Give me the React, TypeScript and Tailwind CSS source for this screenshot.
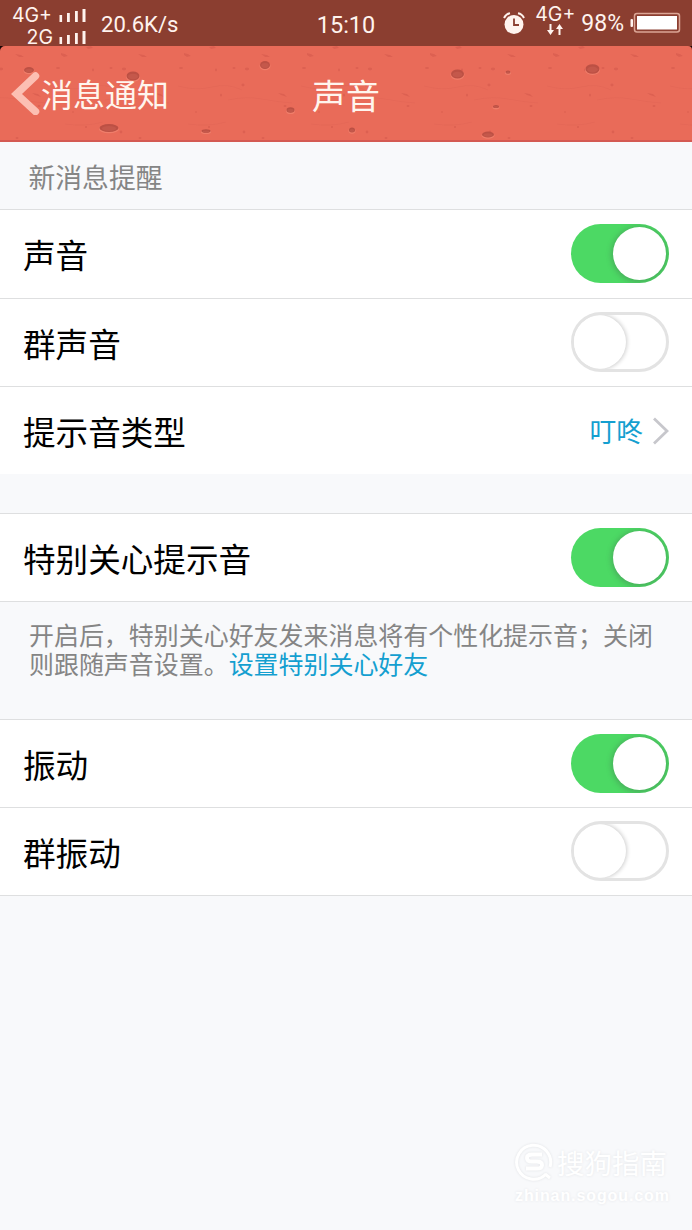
import type { ReactNode } from "react";

interface SwitchProps {
  on: boolean;
}

interface RowProps {
  label: string;
  height?: string;
  children: ReactNode;
}

interface Spot {
  x: number;
  y: number;
  rx: number;
  ry: number;
}

const spots: Spot[] = [
  { x: 29, y: 70, rx: 5, ry: 3 },
  { x: 133, y: 76, rx: 6.5, ry: 4.5 },
  { x: 109, y: 128, rx: 9.5, ry: 4 },
  { x: 206, y: 131, rx: 4.5, ry: 1.8 },
  { x: 265, y: 65, rx: 5, ry: 4 },
  { x: 290.5, y: 110, rx: 4, ry: 2.8 },
  { x: 352, y: 130, rx: 3, ry: 2.5 },
  { x: 457.5, y: 74, rx: 6.5, ry: 4.5 },
  { x: 508, y: 72, rx: 2.5, ry: 1.6 },
  { x: 496, y: 106.5, rx: 3, ry: 1.6 },
  { x: 488, y: 134.5, rx: 6, ry: 3 },
  { x: 592.5, y: 69, rx: 7, ry: 4.8 },
];

function HeaderTexture() {
  return (
    <svg
      className="absolute inset-0"
      width="692"
      height="94"
      viewBox="0 46 692 94"
      aria-hidden="true"
    >
      <defs>
        <pattern id="grain" x="55" y="46" width="123" height="96" patternUnits="userSpaceOnUse">
          <g fill="#b9403a" opacity="0.26">
            <path d="M6 7l4 1 3 2-4 1-3-2z" />
            <path d="M31 1l5-1 2 2-5 1z" />
            <ellipse cx="3" cy="22" rx="2" ry="1" />
            <ellipse cx="69" cy="23" rx="2.2" ry="1.4" />
            <ellipse cx="56" cy="22" rx="1.5" ry="1" />
            <path d="M83 8l6 1 3 2-5 0z" />
            <path d="M100 47l6 1 3 3-6-2z" />
            <ellipse cx="65" cy="39" rx="1.6" ry="1.4" />
            <ellipse cx="38" cy="24" rx="1" ry="1.4" />
            <ellipse cx="43" cy="49" rx="1" ry="1.5" />
            <ellipse cx="107" cy="60" rx="1.6" ry="1" />
            <ellipse cx="66" cy="86" rx="1.4" ry="1.4" />
            <ellipse cx="31" cy="81" rx="1.2" ry="1" />
            <ellipse cx="18" cy="66" rx="1" ry="0.8" />
            <ellipse cx="85" cy="92" rx="1.6" ry="1" />
          </g>
          <g fill="none" stroke="#c94f44" strokeWidth="1" opacity="0.12">
            <path d="M0 40q18 5 34 1t30 3M50 54q18 -4 34 -1t30 4M10 78q20 3 38 -2" />
          </g>
        </pattern>
      </defs>
      <rect x="0" y="46" width="692" height="96" fill="url(#grain)" />
      {spots.map((s) => (
        <g key={`${s.x}-${s.y}`}>
          <ellipse cx={s.x} cy={s.y + 1} rx={s.rx + 0.5} ry={s.ry + 0.3} fill="#f58a76" opacity="0.6" />
          <ellipse cx={s.x} cy={s.y} rx={s.rx} ry={s.ry} fill="#bc5044" />
          <ellipse cx={s.x} cy={s.y + 0.5} rx={s.rx * 0.75} ry={s.ry * 0.6} fill="#c4584b" />
        </g>
      ))}
      <path d="M0 46h5a5 5 0 0 0 -5 5z" fill="#1a0605" />
      <path d="M692 46h-4a4 4 0 0 1 4 4z" fill="#1a0605" />
    </svg>
  );
}

function SignalBars() {
  return (
    <svg width="28" height="14" viewBox="0 0 28 14" fill="#fff3ee" aria-hidden="true">
      <rect x="0.5" y="7" width="2.6" height="7" />
      <rect x="8" y="5" width="2.8" height="9" />
      <rect x="16" y="3" width="2.8" height="11" />
      <rect x="23.5" y="1" width="3" height="13" />
    </svg>
  );
}

function StatusBar() {
  return (
    <div className="relative h-[46px] bg-[#8b3e30] font-['Roboto','Noto_Sans',sans-serif] text-[#fff3ee]">
      <div className="flex h-full justify-between">
        <div className="flex">
          <div className="flex w-[87px] flex-col items-end pt-1">
            <div className="flex h-[22px] items-center">
              <span className="font-['Inter',sans-serif] text-[19.5px] leading-[22px]">4G+</span>
              <span className="ml-[7px]"><SignalBars /></span>
            </div>
            <div className="flex h-[22px] items-center">
              <span className="font-['Inter',sans-serif] text-[19.5px] leading-[22px]">2G</span>
              <span className="ml-[6px]"><SignalBars /></span>
            </div>
          </div>
          <span className="ml-[14px] pt-px text-[22.1px] leading-[46px]">20.6K/s</span>
        </div>
        <div className="flex">
          <svg className="mt-3 mr-[8px]" width="22" height="23" viewBox="0 0 22 23" aria-hidden="true">
            <circle cx="11" cy="12.5" r="9.5" fill="#fff3ee" />
            <path d="M1 6Q3 2 7 1.3M21 6Q19 2 15 1.3" fill="none" stroke="#fff3ee" strokeWidth="2" />
            <path d="M11 6.5v6.5h5" fill="none" stroke="#8b3e30" strokeWidth="1.8" />
          </svg>
          <div className="flex w-[44px] flex-col items-center pt-1">
            <span className="font-['Inter',sans-serif] text-[19.5px] leading-[21px]">4G+</span>
            <svg className="-mt-px" width="16" height="12" viewBox="0 0 16 12" fill="#fff3ee" aria-hidden="true">
              <path d="M2.5 0h2v6h2.5l-3.5 5-3.5-5h2.5z" />
              <path d="M11.5 11h2v-6h2.5l-3.5-5-3.5 5h2.5z" />
            </svg>
          </div>
          <span className="ml-[4px] pt-px text-[23px] leading-[46px]">98%</span>
          <svg className="mt-3 mr-[11px] ml-[6px]" width="51" height="22" viewBox="0 0 51 22" aria-hidden="true">
            <rect x="0.5" y="7" width="2.5" height="8" rx="1" fill="#fff3ee" />
            <rect x="4.5" y="1.5" width="45" height="18.5" rx="2.5" fill="none" stroke="#dba595" strokeWidth="1.5" />
            <rect x="7" y="4" width="40" height="13.5" fill="#fff" />
          </svg>
        </div>
      </div>
      <div className="absolute inset-x-0 top-0 pt-[2px] text-center text-[23.5px] leading-[46px]">
        15:10
      </div>
    </div>
  );
}

function Header() {
  return (
    <header className="relative h-24 border-b-2 border-[#d45a52] bg-[#e96b59] text-[#fff5ee]">
      <HeaderTexture />
      <div className="relative flex h-full items-center">
        <svg className="ml-[11px]" width="30" height="44" viewBox="0 0 30 44" aria-hidden="true">
          <path d="M24.5 5L5.5 23L24.5 40.5" fill="none" stroke="#fcbfb3" strokeWidth="7.5" strokeLinecap="round" />
        </svg>
        <span className="text-[32px] leading-[48px]">消息通知</span>
      </div>
      <h1 className="absolute inset-x-0 top-[25px] text-center text-[34px] leading-[48px]">声音</h1>
    </header>
  );
}

function Switch({ on }: SwitchProps) {
  if (on) {
    return (
      <div className="-mt-px flex h-[59px] w-[98px] items-center justify-end overflow-hidden rounded-full bg-[#4cd964] pr-[3px]">
        <div className="size-[53px] rounded-full bg-white shadow-[0_1px_5px_2px_rgba(70,110,80,0.35)]" />
      </div>
    );
  }
  return (
    <div className="-mt-px flex h-[60px] w-[98px] items-center overflow-hidden rounded-full border-[3px] border-[#e3e3e3] bg-white">
      <div className="-ml-0.5 size-[54px] rounded-full bg-white shadow-[0_0_4px_1px_rgba(0,0,0,0.2)]" />
    </div>
  );
}

function Row({ label, height = "h-[88px]", children }: RowProps) {
  return (
    <div className={`flex items-center justify-between pr-[23px] pl-[23px] ${height}`}>
      <span className="text-[32.6px] leading-[48px] text-black">{label}</span>
      {children}
    </div>
  );
}

function Watermark() {
  return (
    <div className="absolute right-[21px] bottom-[24px] w-[156px] text-white [text-shadow:0_0_3px_#e3e5e8]">
      <div className="flex items-center gap-[3px]">
        <svg className="drop-shadow-[0_0_1px_#dfe1e4]" width="39" height="40" viewBox="0 0 39 40" fill="none" stroke="#fff" aria-hidden="true">
          <path d="M31 32A17 17 0 1 1 35 25M30 32l5 4" strokeWidth="3" />
          <path d="M27 12.5H17q-5 0-5 3.5t5 3.5h5q5 0 5 3.5t-5 3.5H11" strokeWidth="4" />
        </svg>
        <span className="text-[27.5px] leading-[36px]">搜狗指南</span>
      </div>
      <div className="mt-1 font-['Liberation_Sans',sans-serif] text-[16px] leading-[20px] font-bold tracking-[0.9px] whitespace-nowrap">
        zhinan.sogou.com
      </div>
    </div>
  );
}

export default function App() {
  return (
    <div className="relative h-[1230px] w-[692px] overflow-hidden bg-[#f8f9fb] font-['Noto_Sans_CJK_SC',sans-serif]">
      <StatusBar />
      <Header />

      <div className="flex h-[67px] items-center pt-1 pl-[28.5px] text-[26.8px] text-[#858585]">
        新消息提醒
      </div>
      <section className="divide-y divide-[#dedfe0] border-t border-[#dedfe0] bg-white">
        <Row label="声音" height="h-[89px]">
          <Switch on />
        </Row>
        <Row label="群声音">
          <Switch on={false} />
        </Row>
        <Row label="提示音类型" height="h-[87px]">
          <div className="flex items-center gap-[9px]">
            <span className="pt-0.5 text-[26.8px] text-[#149fd0]">叮咚</span>
            <svg width="17" height="28" viewBox="0 0 17 28" aria-hidden="true">
              <path d="M2 1.5L15 14L2 26.5" fill="none" stroke="#c7c7cc" strokeWidth="2.8" />
            </svg>
          </div>
        </Row>
      </section>

      <section className="mt-[39px] border-y border-[#dedfe0] bg-white">
        <Row label="特别关心提示音" height="h-[87px]">
          <Switch on />
        </Row>
      </section>
      <p className="h-[117px] pt-[18px] pl-[29px] text-[24.96px] leading-[29px] whitespace-nowrap text-[#858585]">
        开启后，特别关心好友发来消息将有个性化提示音；关闭
        <br />
        则跟随声音设置。<a className="text-[#149fd0]">设置特别关心好友</a>
      </p>

      <section className="divide-y divide-[#dedfe0] border-y border-[#dedfe0] bg-white">
        <Row label="振动">
          <Switch on />
        </Row>
        <Row label="群振动" height="h-[87px]">
          <Switch on={false} />
        </Row>
      </section>

      <Watermark />
    </div>
  );
}
